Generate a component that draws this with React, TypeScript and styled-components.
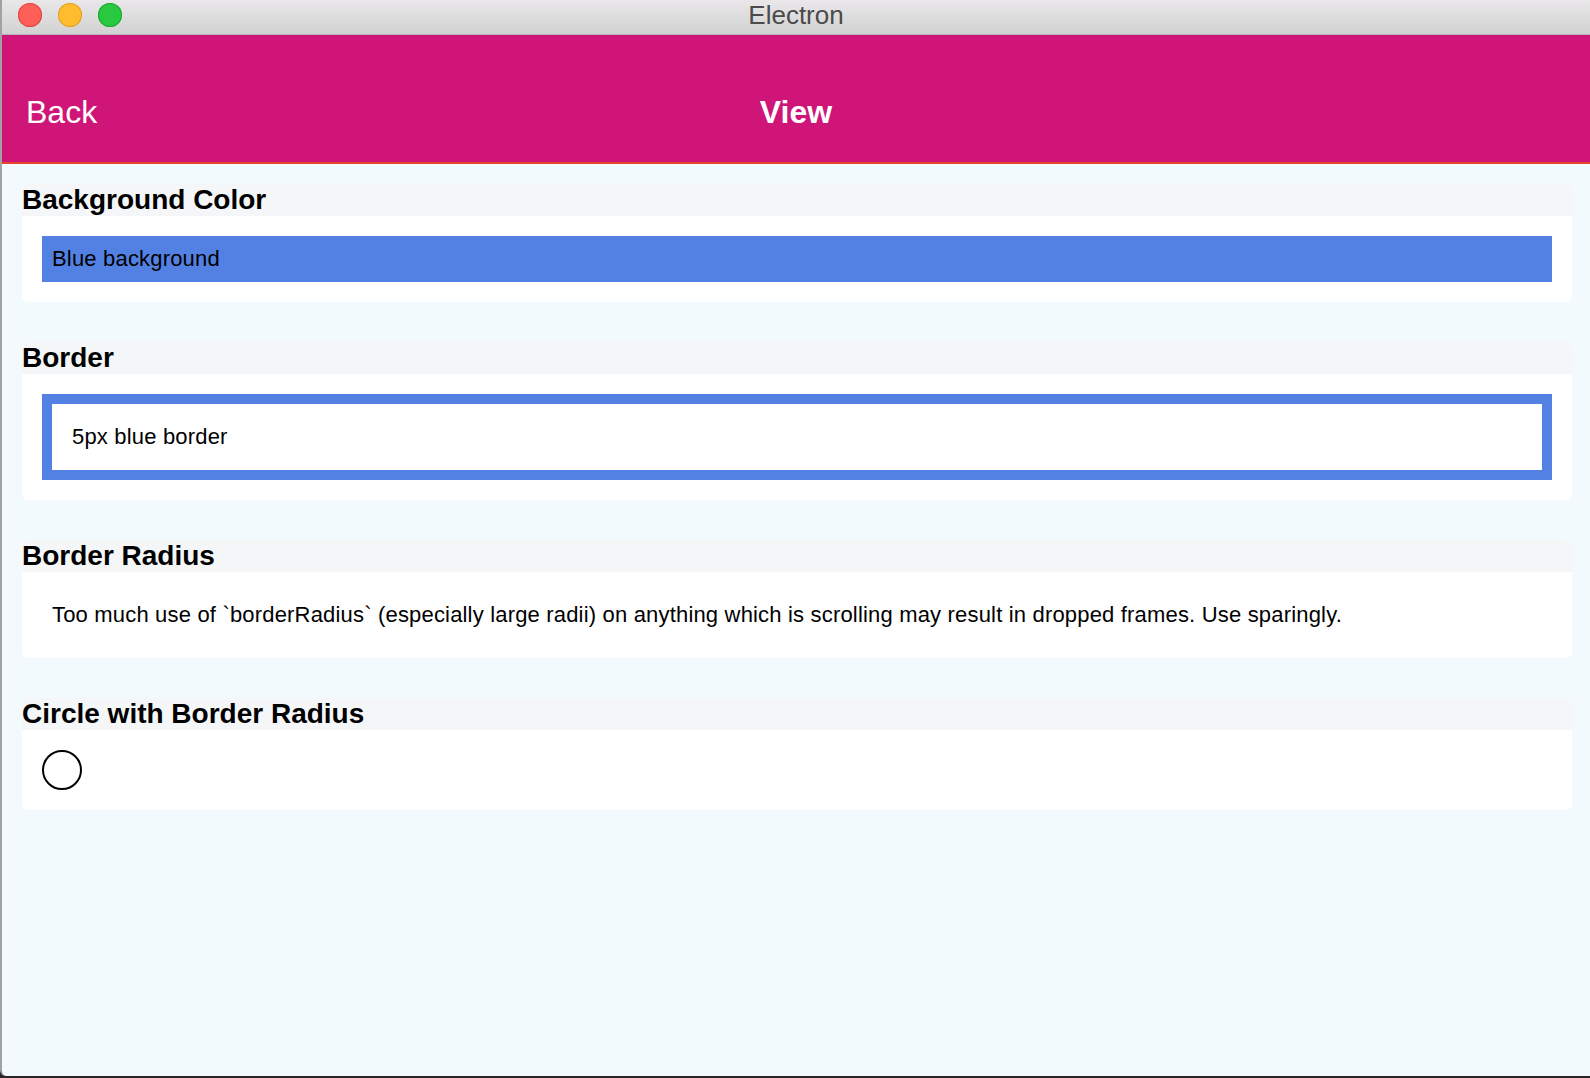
import React from "react";
import styled, { createGlobalStyle } from "styled-components";

const Global = createGlobalStyle`
  html, body { margin: 0; padding: 0; }
  body {
    background: #2b2527;
    font-family: "Liberation Sans", Arial, Helvetica, sans-serif;
    -webkit-font-smoothing: antialiased;
  }
`;

const Screen = styled.div`
  width: 1590px;
  height: 1078px;
  overflow: hidden;
`;

const Window = styled.div`
  height: 1076px;
  display: flex;
  flex-direction: column;
  border-left: 2px solid #a2a2a2;
  border-bottom-left-radius: 6px;
  overflow: hidden;
  background: #f3fafe;
`;

const TitleBar = styled.div`
  height: 35px;
  flex: none;
  box-sizing: border-box;
  padding-bottom: 6px;
  display: grid;
  grid-template-columns: 1fr auto 1fr;
  align-items: center;
  background: linear-gradient(#e9e7e9, #d3d2d3);
  border-bottom: 1px solid #b4b4b4;
`;

const Lights = styled.div`
  display: flex;
  gap: 16px;
  padding-left: 16px;
`;

const Light = styled.span<{ $c: string; $b: string }>`
  width: 24px;
  height: 24px;
  border-radius: 50%;
  background: ${(p) => p.$c};
  box-shadow: inset 0 0 0 1px ${(p) => p.$b};
`;

const WindowTitle = styled.div`
  font-size: 26px;
  color: #4b4b4b;
  line-height: 30px;
`;

const NavBar = styled.div`
  height: 99px;
  flex: none;
  padding-top: 28px;
  display: grid;
  grid-template-columns: 1fr auto 1fr;
  align-items: center;
  background: #cf1578;
  border-bottom: 2px solid #e3462b;
  color: #fff;
`;

const BackButton = styled.div`
  font-size: 32px;
  padding-left: 24px;
`;

const NavTitle = styled.div`
  font-size: 32px;
  font-weight: bold;
`;

const Content = styled.div`
  display: flex;
  flex-direction: column;
  gap: 40px;
  padding: 20px 18px 20px 20px;
`;

const Card = styled.section`
  background: #fff;
  border-radius: 6px;
  overflow: hidden;
`;

const CardHeader = styled.h2`
  margin: 0;
  height: 32px;
  line-height: 32px;
  font-size: 28px;
  font-weight: bold;
  color: #000;
  background: #f5f6f8;
  white-space: nowrap;
`;

const CardBody = styled.div`
  padding: 20px;
`;

const BodyText = `
  font-size: 22px;
  line-height: 26px;
  letter-spacing: 0.18px;
  color: #000;
`;

const BlueBox = styled.div`
  background: #5381e3;
  padding: 10px;
  ${BodyText}
`;

const BorderBox = styled.div`
  border: 10px solid #5381e3;
  padding: 20px;
  ${BodyText}
`;

const Paragraph = styled.p`
  margin: 0;
  padding: 10px;
  ${BodyText}
`;

const Circle = styled.div`
  width: 40px;
  height: 40px;
  box-sizing: border-box;
  border: 2px solid #000;
  border-radius: 50%;
`;

export default function App() {
  return (
    <Screen>
      <Global />
      <Window>
        <TitleBar>
          <Lights>
            <Light $c="#fe5f57" $b="#e2463f" />
            <Light $c="#febc2e" $b="#dea123" />
            <Light $c="#28c840" $b="#1aab29" />
          </Lights>
          <WindowTitle>Electron</WindowTitle>
          <div />
        </TitleBar>
        <NavBar>
          <BackButton>Back</BackButton>
          <NavTitle>View</NavTitle>
          <div />
        </NavBar>
        <Content>
          <Card>
            <CardHeader>Background Color</CardHeader>
            <CardBody>
              <BlueBox>Blue background</BlueBox>
            </CardBody>
          </Card>
          <Card>
            <CardHeader>Border</CardHeader>
            <CardBody>
              <BorderBox>5px blue border</BorderBox>
            </CardBody>
          </Card>
          <Card>
            <CardHeader>Border Radius</CardHeader>
            <CardBody>
              <Paragraph>
                Too much use of `borderRadius` (especially large radii) on anything which is scrolling may result in dropped frames. Use sparingly.
              </Paragraph>
            </CardBody>
          </Card>
          <Card>
            <CardHeader>Circle with Border Radius</CardHeader>
            <CardBody>
              <Circle />
            </CardBody>
          </Card>
        </Content>
      </Window>
    </Screen>
  );
}
